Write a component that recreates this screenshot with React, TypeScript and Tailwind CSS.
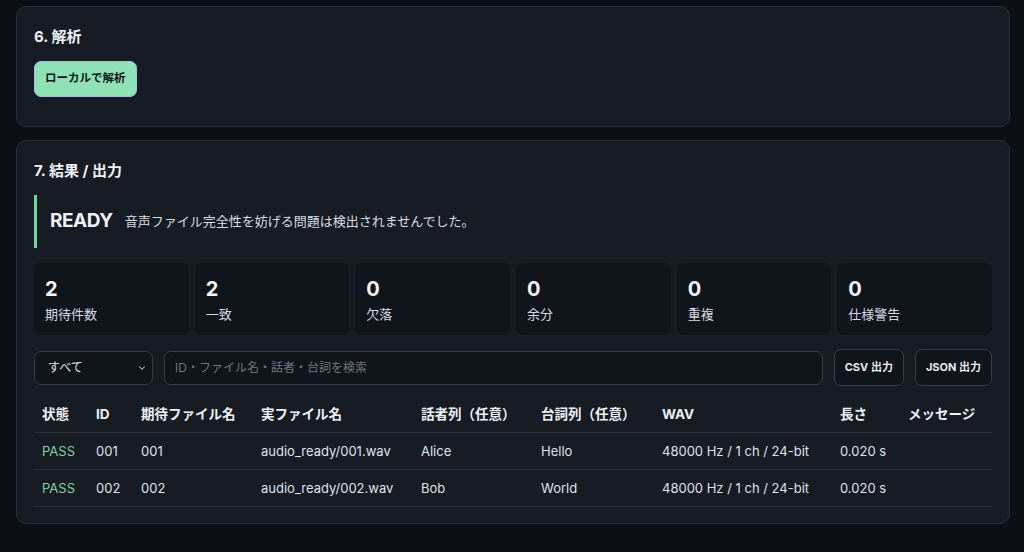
const stats = [
  { value: 2, label: '期待件数' },
  { value: 2, label: '一致' },
  { value: 0, label: '欠落' },
  { value: 0, label: '余分' },
  { value: 0, label: '重複' },
  { value: 0, label: '仕様警告' },
];

const rows = [
  { status: 'PASS', id: '001', expected: '001', actual: 'audio_ready/001.wav', speaker: 'Alice', line: 'Hello', wav: '48000 Hz / 1 ch / 24-bit', length: '0.020 s', message: '' },
  { status: 'PASS', id: '002', expected: '002', actual: 'audio_ready/002.wav', speaker: 'Bob', line: 'World', wav: '48000 Hz / 1 ch / 24-bit', length: '0.020 s', message: '' },
];

const headers = ['状態', 'ID', '期待ファイル名', '実ファイル名', '話者列（任意）', '台詞列（任意）', 'WAV', '長さ', 'メッセージ'];

export default function App() {
  return (
    <div
      className="min-h-[552px] w-full bg-[#0c0f15] px-4 pt-[6px] text-[#e6e9ef]"
      style={{ fontFamily: 'Inter, "Noto Sans CJK JP", sans-serif' }}
    >
      {/* 6. 解析 */}
      <section className="h-[121px] w-[994px] rounded-[10px] border border-[#2a303b] bg-[#161b24] px-[17px] pt-[18px]">
        <h2 className="text-[15px] font-bold leading-6 text-[#f0f2f6]">6. 解析</h2>
        <button
          type="button"
          className="mt-[12px] h-[36px] rounded-[7px] border border-[#9ec3e6] bg-[#8ee2b5] px-[10px] text-[11.5px] font-bold text-[#10151c]"
        >
          ローカルで解析
        </button>
      </section>

      {/* 7. 結果 / 出力 */}
      <section className="mt-[13px] h-[384px] w-[994px] rounded-[10px] border border-[#2a303b] bg-[#161b24] px-[17px] pt-[18px]">
        <h2 className="text-[15px] font-bold leading-6 text-[#f0f2f6]">7. 結果 / 出力</h2>

        <div className="mt-[12px] flex h-[53px] items-center gap-[12px] border-l-[3px] border-[#6fd69d] pl-[13px]">
          <span className="text-[19px] font-bold tracking-tight text-[#eef1f5]">READY</span>
          <span className="text-[13px] text-[#d9dde4]">音声ファイル完全性を妨げる問題は検出されませんでした。</span>
        </div>

        <div className="mt-[15px] grid grid-cols-6 gap-[6px]">
          {stats.map((s) => (
            <div key={s.label} className="h-[72px] rounded-[7px] bg-[#10141b] px-[11px] pt-[14px]">
              <div className="text-[20px] font-bold leading-6 text-[#f2f4f7]">{s.value}</div>
              <div className="mt-[3px] text-[13px] leading-5 text-[#d6dae1]">{s.label}</div>
            </div>
          ))}
        </div>

        <div className="mt-[14px] flex items-center gap-[11px]">
          <div className="flex h-[34px] w-[119px] items-center justify-between rounded-[7px] border border-[#363d49] bg-[#10141b] pl-[13px] pr-[5px] text-[12px] text-[#e6e9ef]">
            <span>すべて</span>
            <svg width="10" height="10" viewBox="0 0 24 24" fill="none" stroke="#b9bfc9" strokeWidth="2.5" strokeLinecap="round" strokeLinejoin="round">
              <path d="m6 9 6 6 6-6" />
            </svg>
          </div>
          <div className="flex h-[34px] flex-1 items-center rounded-[7px] border border-[#363d49] bg-[#10141b] px-[10px] text-[12px] text-[#6f7681]">
            ID・ファイル名・話者・台詞を検索
          </div>
          <button type="button" className="h-[37px] rounded-[7px] border border-[#363d49] bg-[#10141b] px-[10px] text-[11px] font-bold text-[#e6e9ef]">
            CSV 出力
          </button>
          <button type="button" className="h-[37px] rounded-[7px] border border-[#363d49] bg-[#10141b] px-[10px] text-[11px] font-bold text-[#e6e9ef]">
            JSON 出力
          </button>
        </div>

        <table className="mt-[10px] w-full table-fixed border-collapse text-left text-[13px]">
          <colgroup>
            <col className="w-[54px]" />
            <col className="w-[45px]" />
            <col className="w-[120px]" />
            <col className="w-[160px]" />
            <col className="w-[120px]" />
            <col className="w-[121px]" />
            <col className="w-[178px]" />
            <col className="w-[68px]" />
            <col />
          </colgroup>
          <thead>
            <tr className="border-b border-[#2b313c]">
              {headers.map((h) => (
                <th key={h} className="h-[36px] whitespace-nowrap px-2 text-[13.5px] font-bold text-[#eef1f5]">
                  {h}
                </th>
              ))}
            </tr>
          </thead>
          <tbody>
            {rows.map((r) => (
              <tr key={r.id} className="border-b border-[#2b313c]">
                <td className="h-[37px] px-2 pt-[2px] text-[#7fd3a4]">{r.status}</td>
                <td className="px-2 pt-[2px] text-[#dfe3e9]">{r.id}</td>
                <td className="px-2 pt-[2px] text-[#dfe3e9]">{r.expected}</td>
                <td className="px-2 pt-[2px] text-[#dfe3e9]">{r.actual}</td>
                <td className="px-2 pt-[2px] text-[#dfe3e9]">{r.speaker}</td>
                <td className="px-2 pt-[2px] text-[#dfe3e9]">{r.line}</td>
                <td className="whitespace-nowrap px-2 pt-[2px] text-[#dfe3e9]">{r.wav}</td>
                <td className="px-2 pt-[2px] text-[#dfe3e9]">{r.length}</td>
                <td className="px-2 pt-[2px] text-[#dfe3e9]">{r.message}</td>
              </tr>
            ))}
          </tbody>
        </table>
      </section>
    </div>
  );
}
